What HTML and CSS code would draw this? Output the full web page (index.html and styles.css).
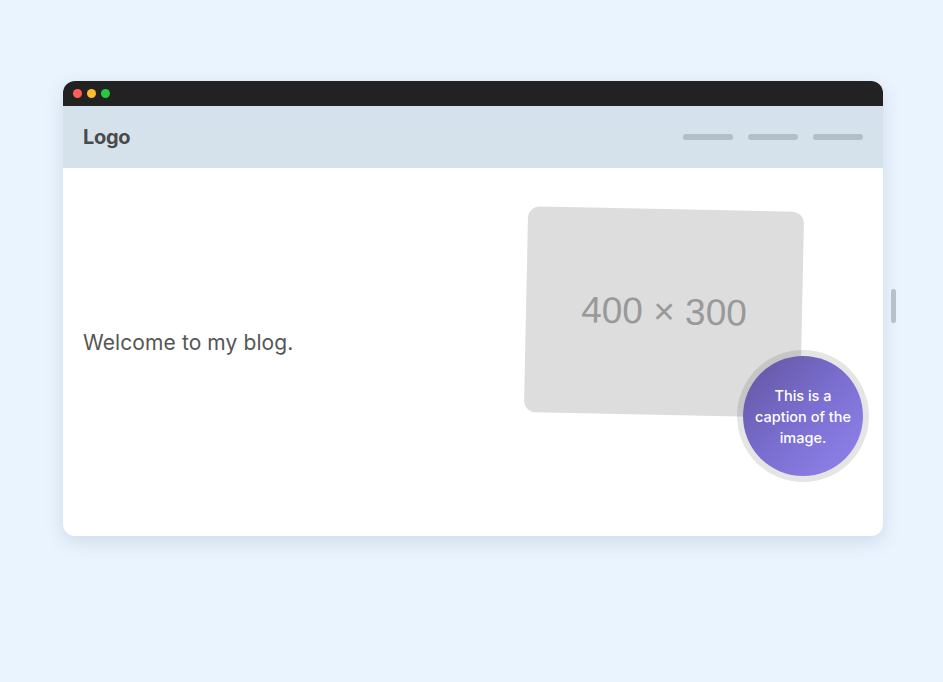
FILE: index.html
```html
<!DOCTYPE html>
<html>
<head>
<meta charset="utf-8">
<link rel="stylesheet" href="styles.css">
</head>
<body>
<div class="stage">
  <div class="window">
    <div class="titlebar">
      <span class="dot red"></span><span class="dot yellow"></span><span class="dot green"></span>
    </div>
    <header class="header">
      <div class="logo">Logo</div>
      <nav class="nav"><span class="nav-item"></span><span class="nav-item"></span><span class="nav-item"></span></nav>
    </header>
    <main class="content">
      <p class="intro">Welcome to my blog.</p>
      <figure class="figure">
        <div class="placeholder">400 × 300</div>
        <figcaption class="caption">This is a caption of the image.</figcaption>
      </figure>
    </main>
  </div>
  <div class="scroll-thumb"></div>
</div>
</body>
</html>
```
FILE: styles.css
```css
html, body {
  margin: 0;
  padding: 0;
  background: #eaf4fe;
  width: 943px;
  height: 682px;
  overflow: hidden;
}
.stage {
  position: relative;
  padding: 81px 0 0 63px;
}
.window {
  width: 820px;
  height: 455px;
  border-radius: 12px;
  overflow: hidden;
  background: #fff;
  box-shadow: 0 6px 18px rgba(70, 100, 140, 0.17);
  font-family: "Inter", "Noto Sans", sans-serif;
}
.titlebar {
  height: 25px;
  background: #222222;
  display: flex;
  align-items: center;
  gap: 5px;
  padding-left: 10px;
}
.dot {
  width: 9px;
  height: 9px;
  border-radius: 50%;
}
.red { background: #ff5f57; }
.yellow { background: #febc2e; }
.green { background: #28c840; }
.header {
  height: 62px;
  background: #d6e2eb;
  display: flex;
  align-items: center;
  justify-content: space-between;
  padding: 0 20px;
}
.logo {
  font-size: 20px;
  font-weight: 700;
  color: #4a4a4a;
  letter-spacing: -0.3px;
}
.nav {
  display: flex;
  gap: 15px;
}
.nav-item {
  width: 50px;
  height: 6px;
  border-radius: 3px;
  background: #b3bfc8;
}
.content {
  height: 368px;
  box-sizing: border-box;
  display: flex;
  justify-content: space-between;
  align-items: flex-start;
  padding: 41px 0 0 20px;
}
.intro {
  margin: 120px 0 0;
  font-size: 21px;
  line-height: 28px;
  letter-spacing: 0.1px;
  color: #555;
}
.figure {
  position: relative;
  margin: 0 81px 0 0;
  width: 276px;
  height: 206px;
}
.placeholder {
  width: 100%;
  height: 100%;
  background: #dddddd;
  border-radius: 12px;
  transform: rotate(1.2deg);
  display: flex;
  align-items: center;
  justify-content: center;
  font-family: "Liberation Sans", Arial, sans-serif;
  font-size: 37px;
  color: #999;
}
.caption {
  position: absolute;
  left: 211px;
  top: 141px;
  height: 120px;
  border-radius: 50%;
  border: 6px solid rgba(0, 0, 0, 0.1);
  background: linear-gradient(135deg, #62559f 0%, #7a6ed0 50%, #9185ee 100%);
  background-clip: padding-box;
  display: flex;
  align-items: center;
  justify-content: center;
  text-align: center;
  color: #fff;
  font-size: 14.5px;
  font-weight: 500;
  line-height: 21px;
  padding: 0 8px;
  box-sizing: content-box;
  width: 104px;
}
.scroll-thumb {
  position: absolute;
  left: 891px;
  top: 289px;
  width: 5px;
  height: 34px;
  border-radius: 3px;
  background: #b8c1ca;
}
```
